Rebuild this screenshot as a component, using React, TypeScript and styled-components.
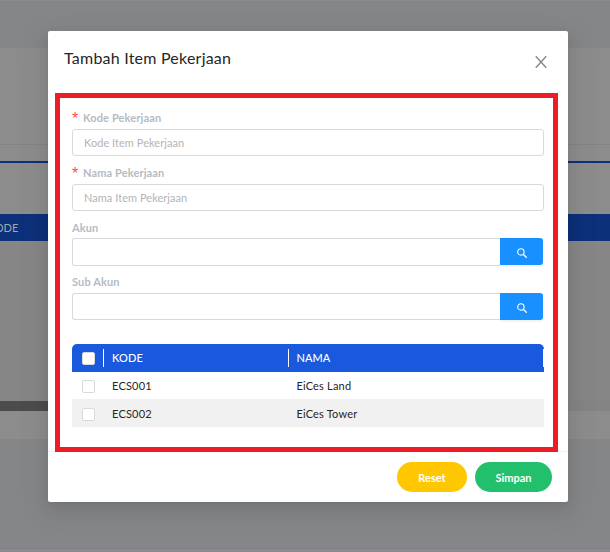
import React from "react";
import styled, { createGlobalStyle } from "styled-components";

const Global = createGlobalStyle`
  *, *::before, *::after { box-sizing: border-box; }
  html, body { margin: 0; padding: 0; overflow: hidden; }
  body { font-family: Lato, "Open Sans", sans-serif; font-size: 11px; color: #262626; }
`;

const Screen = styled.div`
  position: relative;
  width: 610px;
  height: 552px;
  overflow: hidden;
  background: #8c8c8c;
`;

const Backdrop = styled.div`
  display: flex;
  flex-direction: column;
  height: 100%;
`;

const Band = styled.div<{ $h: number; $c: string }>`
  flex: none;
  height: ${(p) => p.$h}px;
  background: ${(p) => p.$c};
`;

const PageHead = styled(Band)`
  display: flex;
  align-items: center;
  color: #a3a7ae;
  font-size: 11px;
  line-height: 27px;
  span { margin-left: -12px; }
`;

const ScrollTrack = styled(Band)`
  display: flex;
  &::before { content: ""; width: 300px; background: #4c4c4c; }
`;

const Modal = styled.section`
  position: absolute;
  left: 48px;
  top: 31px;
  width: 520px;
  height: 471px;
  display: flex;
  flex-direction: column;
  background: #fff;
  border-radius: 2px;
  box-shadow: 0 3px 6px -4px rgba(0, 0, 0, 0.12), 0 6px 16px rgba(0, 0, 0, 0.08),
    0 9px 28px 8px rgba(0, 0, 0, 0.05);
`;

const Header = styled.header`
  display: flex;
  justify-content: space-between;
  height: 62px;
  padding: 16px 21px 0 16px;
`;

const Title = styled.h1`
  margin: 0;
  font-size: 16px;
  line-height: 21px;
  font-weight: 400;
  letter-spacing: 0.22px;
  color: #262626;
`;

const Close = styled.button`
  width: 12px;
  height: 12px;
  margin-top: 9px;
  padding: 0;
  border: 0;
  background: none;
  svg { display: block; }
`;

const Body = styled.div`
  display: flex;
  flex-direction: column;
  height: 358px;
  padding: 17px 24px 0;
`;

const Field = styled.div<{ $h: number }>`
  height: ${(p) => p.$h}px;
  flex: none;
`;

const Label = styled.label<{ $h: number }>`
  display: flex;
  height: ${(p) => p.$h}px;
  line-height: 16px;
  font-size: 11px;
  font-weight: 700;
  letter-spacing: 0.13px;
  color: #b5bbc5;
`;

const Star = styled.span`
  width: 11px;
  color: #ff4d4f;
  font: 400 16px/17px "Liberation Sans", sans-serif;
`;

const Row = styled.div`
  display: flex;
`;

const Input = styled.input<{ $h: number; $joined?: boolean }>`
  flex: 1;
  min-width: 0;
  height: ${(p) => p.$h}px;
  padding: 0 11px 1px;
  border: 1px solid #d9d9d9;
  border-right-width: ${(p) => (p.$joined ? 0 : 1)}px;
  border-radius: ${(p) => (p.$joined ? "3px 0 0 3px" : "3px")};
  background: #fff;
  outline: 0;
  font: 400 11px Lato, sans-serif;
  letter-spacing: 0.04px;
  &::placeholder { color: #b4b4b4; opacity: 1; }
`;

const SearchButton = styled.button`
  display: flex;
  align-items: center;
  justify-content: center;
  width: 43px;
  height: 27px;
  margin-right: 1px;
  padding: 3px 0 0;
  border: 0;
  border-radius: 0 3px 3px 0;
  background: #1890ff;
  box-shadow: 0 2px 0 rgba(0, 0, 0, 0.045);
`;

const Table = styled.div`
  display: flex;
  flex-direction: column;
`;

const TableRow = styled.div<{ $kind: "head" | "plain" | "striped" }>`
  display: grid;
  grid-template-columns: 31px 185px 1fr 1px;
  align-items: center;
  height: ${(p) => (p.$kind === "plain" ? 27 : 28)}px;
  padding-top: ${(p) => (p.$kind === "striped" ? 2 : 0)}px;
  background: ${(p) => ({ head: "#1959dd", plain: "#fff", striped: "#f1f1f1" })[p.$kind]};
  color: ${(p) => (p.$kind === "head" ? "#fff" : "#262626")};
  font-weight: ${(p) => (p.$kind === "head" ? 500 : 400)};
  letter-spacing: ${(p) => (p.$kind === "head" ? 0.1 : 0.2)}px;
  border-radius: ${(p) => (p.$kind === "head" ? "5px 5px 0 0" : 0)};
  font-size: 11px;
`;

const Cell = styled.div<{ $divider?: boolean }>`
  height: 18px;
  line-height: 18px;
  padding-left: 8px;
  border-left: 1px solid ${(p) => (p.$divider ? "#fff" : "transparent")};
  & + & { padding-left: 7.4px; }
`;

const EndDivider = styled.i`
  height: 18px;
  background: #fff;
`;

const Check = styled.span`
  width: 13px;
  height: 13px;
  margin-left: 10px;
  margin-top: 1px;
  border: 1px solid #d9d9d9;
  border-radius: 2px;
  background: #fff;
`;

const Footer = styled.footer`
  display: flex;
  justify-content: flex-end;
  gap: 8px;
  height: 51px;
  padding: 10px 16px 0;
  border-top: 1px solid #f0f0f0;
`;

const Pill = styled.button<{ $w: number; $c: string }>`
  width: ${(p) => p.$w}px;
  height: 30px;
  padding: 1px 0 0;
  border: 0;
  border-radius: 15px;
  background: ${(p) => p.$c};
  color: #fff;
  font: 700 11px Lato, sans-serif;
`;

const Highlight = styled.div`
  position: absolute;
  left: 55px;
  top: 93px;
  width: 503px;
  height: 359px;
  border: 5px solid #ee1c24;
  pointer-events: none;
`;

const SearchIcon = () => (
  <svg width="10" height="10" viewBox="0 0 10 10" fill="none" stroke="#fff">
    <circle cx="3.9" cy="3.9" r="3.2" strokeWidth="1.1" />
    <path d="M6.2 6.2 9.7 9.7" strokeWidth="1.3" />
  </svg>
);

const rows = [
  { kode: "ECS001", nama: "EiCes Land" },
  { kode: "ECS002", nama: "EiCes Tower" },
];

export default function App() {
  return (
    <>
      <Global />
      <Screen>
        <Backdrop>
          <Band $h={1} $c="#8c8c8c" />
          <Band $h={47} $c="#858688" />
          <Band $h={96} $c="#8c8c8c" />
          <Band $h={1} $c="#838383" />
          <Band $h={16} $c="#8c8c8c" />
          <Band $h={2} $c="#0d307a" />
          <Band $h={51} $c="#8c8c8c" />
          <PageHead $h={27} $c="#0d307a"><span>KODE</span></PageHead>
          <Band $h={160} $c="#868686" />
          <ScrollTrack $h={10} $c="#848484" />
          <Band $h={28} $c="#8c8c8c" />
          <Band $h={109} $c="#858688" />
          <Band $h={1} $c="#7d7e86" />
          <Band $h={3} $c="#8b8b8c" />
        </Backdrop>
        <Modal role="dialog">
          <Header>
            <Title>Tambah Item Pekerjaan</Title>
            <Close aria-label="Close">
              <svg width="12" height="12" viewBox="0 0 12 12" stroke="#858585" strokeWidth="1.35" fill="none">
                <path d="M.8.2 11.2 11.8M11.2.2.8 11.8" />
              </svg>
            </Close>
          </Header>
          <Body>
            <Field $h={55}>
              <Label $h={19}><Star>*</Star>Kode Pekerjaan</Label>
              <Row><Input $h={27} placeholder="Kode Item Pekerjaan" /></Row>
            </Field>
            <Field $h={55}>
              <Label $h={19}><Star>*</Star>Nama Pekerjaan</Label>
              <Row><Input $h={27} placeholder="Nama Item Pekerjaan" /></Row>
            </Field>
            <Field $h={54}>
              <Label $h={18}>Akun</Label>
              <Row>
                <Input $h={28} $joined />
                <SearchButton aria-label="Search"><SearchIcon /></SearchButton>
              </Row>
            </Field>
            <Field $h={70}>
              <Label $h={19}>Sub Akun</Label>
              <Row>
                <Input $h={27} $joined />
                <SearchButton aria-label="Search"><SearchIcon /></SearchButton>
              </Row>
            </Field>
            <Table>
              <TableRow $kind="head">
                <Check />
                <Cell $divider>KODE</Cell>
                <Cell $divider>NAMA</Cell>
                <EndDivider />
              </TableRow>
              {rows.map((r, i) => (
                <TableRow key={r.kode} $kind={i % 2 ? "striped" : "plain"}>
                  <Check />
                  <Cell>{r.kode}</Cell>
                  <Cell>{r.nama}</Cell>
                </TableRow>
              ))}
            </Table>
          </Body>
          <Footer>
            <Pill $w={70} $c="#ffc700">Reset</Pill>
            <Pill $w={77} $c="#22c06c">Simpan</Pill>
          </Footer>
        </Modal>
        <Highlight />
      </Screen>
    </>
  );
}
